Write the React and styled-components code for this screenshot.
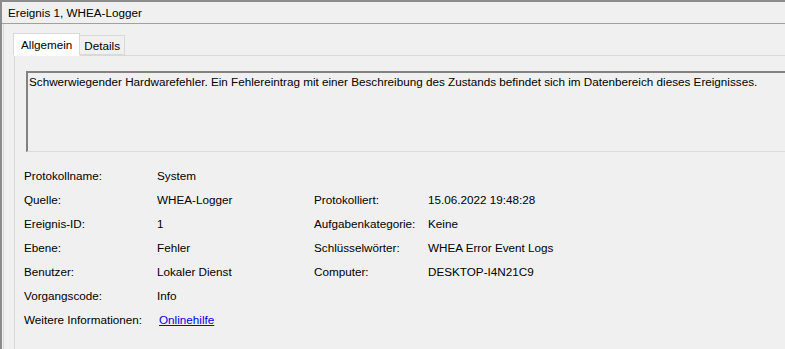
import React from "react";
import styled, { createGlobalStyle } from "styled-components";

const GlobalStyle = createGlobalStyle`
  html, body {
    margin: 0;
    padding: 0;
    background: #f0f0f0;
  }
  body {
    font-family: "Segoe UI", "Liberation Sans", Arial, sans-serif;
    font-size: 11.7px;
    color: #000;
    overflow: hidden;
  }
`;

const Window = styled.div`
  width: 785px;
  height: 349px;
  box-sizing: border-box;
  border-top: 2px solid #8c8c8c;
  border-left: 2px solid #8c8c8c;
  background: #f0f0f0;
  overflow: hidden;
`;

const TitleBar = styled.div`
  height: 21px;
  line-height: 21px;
  padding-left: 6px;
  border-bottom: 1px solid #a0a0a0;
`;

const Body = styled.div`
  padding: 8px 0 0 9px;
  border-left: 1px solid #dadada;
  margin-left: 1px;
  height: 100%;
`;

const TabStrip = styled.div`
  display: flex;
  align-items: flex-end;
  height: 23px;
  position: relative;
  z-index: 1;
`;

const Tab = styled.div`
  box-sizing: border-box;
  height: ${(p) => (p.$active ? "23px" : "20px")};
  line-height: ${(p) => (p.$active ? "21px" : "19px")};
  padding: 0 ${(p) => (p.$active ? "7px" : "4px")};
  border: 1px solid #d9d9d9;
  border-bottom: ${(p) => (p.$active ? "1px solid #ffffff" : "1px solid #d9d9d9")};
  border-left: ${(p) => (p.$active ? "1px solid #d9d9d9" : "none")};
  background: ${(p) => (p.$active ? "#ffffff" : "#f0f0f0")};
  margin-bottom: ${(p) => (p.$active ? "-1px" : "0")};
`;

const Panel = styled.div`
  border-top: 1px solid #d9d9d9;
  border-left: 1px solid #d9d9d9;
  margin-left: 1px;
  padding: 15px 0 0 11px;
  height: 300px;
`;

const MessageBox = styled.div`
  height: 77px;
  border-top: 2px solid #828282;
  border-left: 2px solid #828282;
  border-bottom: 1px solid #dcdcdc;
  padding: 1px 0 0 1px;
  line-height: 16px;
  white-space: nowrap;
  box-sizing: content-box;
`;

const PropGrid = styled.div`
  display: grid;
  grid-template-columns: 133px 157px 114px 1fr;
  grid-auto-rows: 24px;
  align-items: center;
  margin: 12px 0 0 -2px;
`;

const Cell = styled.div`
  white-space: nowrap;
  line-height: 16px;
`;

const Link = styled.a`
  color: #0000e0;
  text-decoration: underline;
  margin-left: 2px;
  cursor: pointer;
`;

const rows = [
  ["Protokollname:", "System"],
  ["Quelle:", "WHEA-Logger", "Protokolliert:", "15.06.2022 19:48:28"],
  ["Ereignis-ID:", "1", "Aufgabenkategorie:", "Keine"],
  ["Ebene:", "Fehler", "Schlüsselwörter:", "WHEA Error Event Logs"],
  ["Benutzer:", "Lokaler Dienst", "Computer:", "DESKTOP-I4N21C9"],
  ["Vorgangscode:", "Info"],
];

export default function App() {
  return (
    <>
      <GlobalStyle />
      <Window>
        <TitleBar>Ereignis 1, WHEA-Logger</TitleBar>
        <Body>
          <TabStrip>
            <Tab $active>Allgemein</Tab>
            <Tab>Details</Tab>
          </TabStrip>
          <Panel>
            <MessageBox>
              Schwerwiegender Hardwarefehler. Ein Fehlereintrag mit einer
              Beschreibung des Zustands befindet sich im Datenbereich dieses
              Ereignisses.
            </MessageBox>
            <PropGrid>
              {rows.map((r) => (
                <React.Fragment key={r[0]}>
                  <Cell>{r[0]}</Cell>
                  <Cell>{r[1]}</Cell>
                  <Cell>{r[2] || ""}</Cell>
                  <Cell>{r[3] || ""}</Cell>
                </React.Fragment>
              ))}
              <Cell>Weitere Informationen:</Cell>
              <Cell>
                <Link>Onlinehilfe</Link>
              </Cell>
            </PropGrid>
          </Panel>
        </Body>
      </Window>
    </>
  );
}
